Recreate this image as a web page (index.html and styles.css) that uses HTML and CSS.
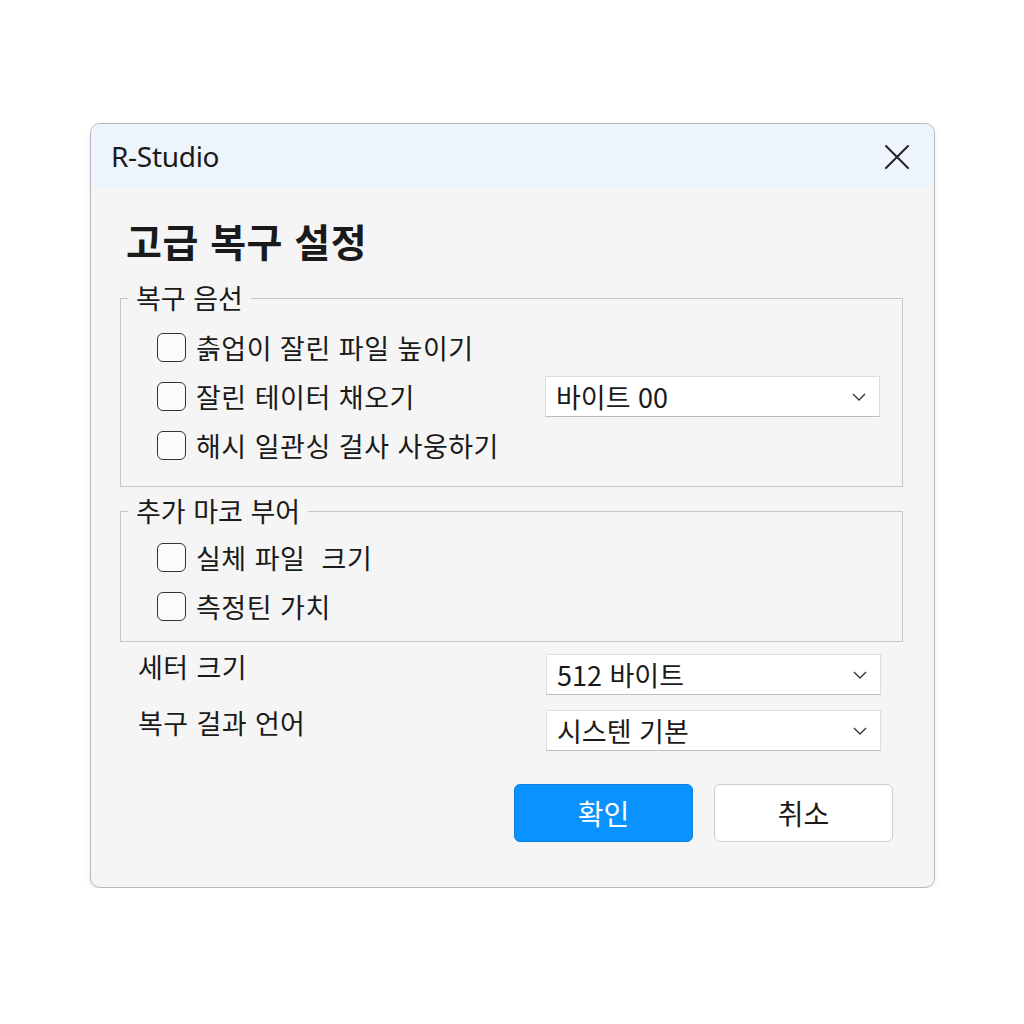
FILE: index.html
```html
<!DOCTYPE html>
<html lang="ko">
<head>
    <meta charset="UTF-8">
    <meta name="viewport" content="width=device-width, initial-scale=1.0">
    <title>R-Studio</title>
    <link rel="stylesheet" href="styles.css">
</head>
<body>
    <div class="dialog">
        <div class="titlebar">
            <span class="app-name">R-Studio</span>
            <svg class="close" width="26" height="26" viewBox="0 0 26 26">
                <path d="M2 2 L24 24 M24 2 L2 24" stroke="#222" stroke-width="2" fill="none" stroke-linecap="round"/>
            </svg>
        </div>

        <div class="content">
            <h1>고급 복구 설정</h1>

            <fieldset class="group">
                <legend>복구 음선</legend>
                <div class="row">
                    <label class="check"><span class="box"></span>츩업이 잘린 파일 높이기</label>
                </div>
                <div class="row">
                    <label class="check"><span class="box"></span>잘린 테이터 채오기</label>
                    <div class="select">바이트 00<svg class="chev" width="14" height="8" viewBox="0 0 14 8"><path d="M1 1 L7 7 L13 1" stroke="#333" stroke-width="1.3" fill="none"/></svg></div>
                </div>
                <div class="row">
                    <label class="check"><span class="box"></span>해시 일관싱 걸사 사웅하기</label>
                </div>
            </fieldset>

            <fieldset class="group second">
                <legend>추가 마코 부어</legend>
                <div class="row">
                    <label class="check"><span class="box"></span>실체 파일&nbsp; 크기</label>
                </div>
                <div class="row">
                    <label class="check"><span class="box"></span>측정틴 가치</label>
                </div>
            </fieldset>

            <div class="setting first">
                <span class="setting-label">세터 크기</span>
                <div class="select">512 바이트<svg class="chev" width="14" height="8" viewBox="0 0 14 8"><path d="M1 1 L7 7 L13 1" stroke="#333" stroke-width="1.3" fill="none"/></svg></div>
            </div>
            <div class="setting">
                <span class="setting-label">복구 걸과 언어</span>
                <div class="select">시스텐 기본<svg class="chev" width="14" height="8" viewBox="0 0 14 8"><path d="M1 1 L7 7 L13 1" stroke="#333" stroke-width="1.3" fill="none"/></svg></div>
            </div>

            <div class="buttons">
                <button class="btn primary">확인</button>
                <button class="btn">취소</button>
            </div>
        </div>
    </div>
</body>
</html>
```

FILE: styles.css
```css
body {
    margin: 0;
    background: #ffffff;
    font-family: "Noto Sans CJK KR", "Noto Sans", sans-serif;
    color: #1a1a1a;
    padding: 123px 0 0 90px;
}
.dialog {
    width: 843px;
    height: 763px;
    background: #f5f5f5;
    border: 1px solid #b9b9b9;
    border-radius: 10px;
    overflow: hidden;
    box-shadow: 0 2px 6px rgba(0, 0, 0, 0.08);
}
.titlebar {
    height: 64px;
    background: #eef4fb;
    display: flex;
    align-items: center;
    justify-content: space-between;
    padding: 0 24px 0 20px;
}
.app-name {
    font-family: "Noto Sans", sans-serif;
    font-size: 28px;
    letter-spacing: -0.3px;
    color: #1a1a1a;
}
.close {
    display: block;
    margin-top: 2px;
}
.content {
    padding: 0 31px 0 29px;
}
h1 {
    margin: 22px 0 0 6px;
    font-size: 39px;
    font-weight: bold;
    line-height: 60px;
    letter-spacing: 0.5px;
}
.group {
    margin: 13px 0 0;
    border: 1px solid #c6c6c6;
    padding: 10px 22px 16px 36px;
}
.group.second {
    margin-top: 9px;
    padding-top: 7px;
    padding-bottom: 10px;
}
legend {
    font-size: 27px;
    line-height: 30px;
    padding: 0 8px;
    margin-left: -29px;
}
.row {
    height: 49px;
    display: flex;
    align-items: center;
    justify-content: space-between;
}
.check {
    display: flex;
    align-items: center;
    font-size: 27px;
    letter-spacing: 0.5px;
}
.box {
    width: 27px;
    height: 27px;
    border: 1.5px solid #333;
    border-radius: 6px;
    background: #fbfbfb;
    margin-right: 10px;
}
.select {
    height: 39px;
    background: #ffffff;
    border: 1px solid #dddddd;
    border-bottom-color: #bdbdbd;
    display: flex;
    align-items: center;
    justify-content: space-between;
    padding: 0 13px 0 10px;
    font-size: 27px;
    box-sizing: content-box;
    width: 310px;
}
.chev {
    display: block;
}
.setting {
    display: flex;
    justify-content: space-between;
    align-items: flex-start;
    padding: 0 22px 0 18px;
    margin-top: 15px;
}
.setting.first {
    margin-top: 12px;
}
.setting-label {
    font-size: 27px;
    line-height: 30px;
    margin-top: -2px;
    letter-spacing: 0.4px;
}
.buttons {
    display: flex;
    justify-content: flex-end;
    gap: 21px;
    margin-top: 33px;
    padding-right: 10px;
}
.btn {
    width: 179px;
    height: 58px;
    border-radius: 6px;
    border: 1px solid #cccccc;
    background: #ffffff;
    font-family: "Noto Sans CJK KR", sans-serif;
    font-size: 28px;
    color: #1a1a1a;
}
.btn.primary {
    background: #0a93ff;
    border-color: #0a7fe0;
    color: #ffffff;
}
```
